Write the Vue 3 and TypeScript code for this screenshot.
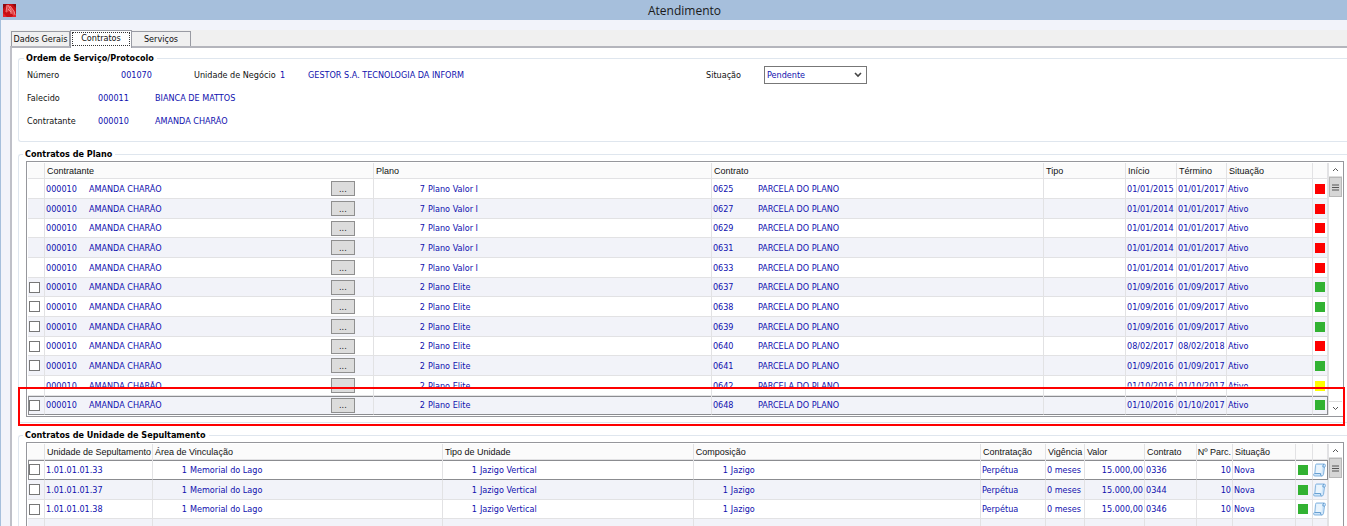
<script setup lang="ts">
import { ref } from 'vue'

type Color = 'red' | 'green' | 'yellow'

interface PlanRow {
  planNumber: number
  plan: string
  contract: string
  start: string
  end: string
  color: Color
  checkable: boolean
  covered?: boolean
  current?: boolean
}

interface UnitRow {
  unit: string
  contract: string
  current?: boolean
}

const tabs = ['Dados Gerais', 'Contratos', 'Serviços']
const activeTab = ref('Contratos')
const status = ref('Pendente')

const valor = (contract: string, start: string): PlanRow => ({
  planNumber: 7, plan: 'Plano Valor I', contract, start, end: '01/01/2017', color: 'red', checkable: false,
})
const elite = (contract: string, start: string, end: string, color: Color): PlanRow => ({
  planNumber: 2, plan: 'Plano Elite', contract, start, end, color, checkable: true,
})

const planRows: PlanRow[] = [
  valor('0625', '01/01/2015'),
  valor('0627', '01/01/2014'),
  valor('0629', '01/01/2014'),
  valor('0631', '01/01/2014'),
  valor('0633', '01/01/2014'),
  elite('0637', '01/09/2016', '01/09/2017', 'green'),
  elite('0638', '01/09/2016', '01/09/2017', 'green'),
  elite('0639', '01/09/2016', '01/09/2017', 'green'),
  elite('0640', '08/02/2017', '08/02/2018', 'red'),
  elite('0641', '01/09/2016', '01/09/2017', 'green'),
  { ...elite('0642', '01/10/2016', '01/10/2017', 'yellow'), checkable: false, covered: true },
  { ...elite('0648', '01/10/2016', '01/10/2017', 'green'), current: true },
]

const unitRows: UnitRow[] = [
  { unit: '1.01.01.01.33', contract: '0336', current: true },
  { unit: '1.01.01.01.37', contract: '0344' },
  { unit: '1.01.01.01.38', contract: '0346' },
]
</script>

<template>
  <div class="window">
    <header class="titlebar">
      <svg class="logo" width="13" height="13" viewBox="0 0 13 13" aria-hidden="true">
        <rect width="13" height="13" fill="#c90f14" />
        <path d="M0 0h4L0 5zM9 0h4v4z" fill="#8d0a10" />
        <path d="M0 9l4 4H0zM8 13l5-3v3z" fill="#e8222a" />
        <path d="M4 1l4 1 4 7-1 3-5-5-3 2z" fill="#e2474a" />
        <path d="M4 1L3 8M5 1l3 5v4M7 2l4 5 1 4M5 5l3 3" fill="none" stroke="#f59a9a" stroke-width="0.8" />
      </svg>
      <h1>Atendimento</h1>
    </header>

    <main class="client">
      <nav class="tabs" role="tablist">
        <button
          v-for="tab in tabs"
          :key="tab"
          type="button"
          role="tab"
          class="tab"
          :class="{ active: tab === activeTab }"
          :aria-selected="tab === activeTab"
          @click="activeTab = tab"
        ><span>{{ tab }}</span></button>
      </nav>

      <section class="panel">
        <fieldset class="group order">
          <legend>Ordem de Serviço/Protocolo</legend>
          <div class="line first">
            <label for="numero">Número</label>
            <output id="numero">001070</output>
            <label for="unidade">Unidade de Negócio</label>
            <output id="unidade">1</output>
            <output>GESTOR S.A. TECNOLOGIA DA INFORM</output>
            <label for="situacao">Situação</label>
            <div class="select">
              <select id="situacao" v-model="status">
                <option>Pendente</option>
                <option>Concluído</option>
              </select>
              <svg width="8" height="6" viewBox="0 0 8 6" aria-hidden="true">
                <path d="M1 1l3 3 3-3" fill="none" stroke="#444" stroke-width="1.6" />
              </svg>
            </div>
          </div>
          <div class="line">
            <label for="falecido">Falecido</label>
            <output id="falecido">000011</output>
            <output>BIANCA DE MATTOS</output>
          </div>
          <div class="line">
            <label for="contratante">Contratante</label>
            <output id="contratante">000010</output>
            <output>AMANDA CHARÃO</output>
          </div>
        </fieldset>

        <fieldset class="group plans">
          <legend>Contratos de Plano</legend>
          <div class="grid">
            <table>
              <colgroup>
                <col class="w-check"><col class="w-holder"><col class="w-plan"><col>
                <col class="w-kind"><col class="w-date"><col class="w-date-end"><col class="w-status"><col class="w-mark-last">
              </colgroup>
              <thead>
                <tr>
                  <th></th><th>Contratante</th><th>Plano</th><th>Contrato</th><th>Tipo</th>
                  <th>Início</th><th>Término</th><th>Situação</th><th></th>
                </tr>
              </thead>
              <tbody>
                <tr v-for="row in planRows" :key="row.contract" :class="{ covered: row.covered, current: row.current }">
                  <td class="check"><input v-if="row.checkable" type="checkbox" :aria-label="'Contrato ' + row.contract"></td>
                  <td>
                    <div class="cell">
                      <span class="code">000010</span><span class="name">AMANDA CHARÃO</span>
                      <button type="button" class="more"><span>...</span></button>
                    </div>
                  </td>
                  <td><div class="cell"><span class="plan-no">{{ row.planNumber }}</span><span>{{ row.plan }}</span></div></td>
                  <td><div class="cell"><span class="contract-no">{{ row.contract }}</span><span>PARCELA DO PLANO</span></div></td>
                  <td></td>
                  <td><span>{{ row.start }}</span></td>
                  <td><span>{{ row.end }}</span></td>
                  <td><span>Ativo</span></td>
                  <td class="mark"><i :class="row.color"></i></td>
                </tr>
              </tbody>
            </table>
            <div class="scrollbar">
              <button type="button" aria-label="Rolar para cima">
                <svg width="7" height="5" viewBox="0 0 7 5"><path d="M1 4l2.500-2.500L6 4" fill="none" stroke="#555" /></svg>
              </button>
              <div class="thumb"><svg width="7" height="7" viewBox="0 0 7 7"><path d="M0 1h7M0 3.500h7M0 6h7" stroke="#555" /></svg></div>
              <button type="button" class="down" aria-label="Rolar para baixo">
                <svg width="7" height="5" viewBox="0 0 7 5"><path d="M1 1l2.500 2.500L6 1" fill="none" stroke="#555" /></svg>
              </button>
            </div>
            <div class="highlight"></div>
          </div>
        </fieldset>

        <fieldset class="group units">
          <legend>Contratos de Unidade de Sepultamento</legend>
          <div class="grid">
            <table>
              <colgroup>
                <col class="w-check"><col class="w-unit"><col class="w-area"><col class="w-type"><col>
                <col class="w-hire"><col class="w-term"><col class="w-value"><col class="w-contract">
                <col class="w-parts"><col class="w-state"><col class="w-mark"><col class="w-mark-last">
              </colgroup>
              <thead>
                <tr>
                  <th></th><th>Unidade de Sepultamento</th><th>Área de Vinculação</th><th>Tipo de Unidade</th>
                  <th>Composição</th><th>Contratação</th><th>Vigência</th><th>Valor</th><th>Contrato</th>
                  <th class="num">Nº Parc.</th><th>Situação</th><th></th><th></th>
                </tr>
              </thead>
              <tbody>
                <tr v-for="row in unitRows" :key="row.unit" :class="{ current: row.current }">
                  <td class="check"><input type="checkbox" :aria-label="'Unidade ' + row.unit"></td>
                  <td>{{ row.unit }}</td>
                  <td><div class="cell"><span class="ref-no">1</span><span>Memorial do Lago</span></div></td>
                  <td><div class="cell"><span class="ref-no">1</span><span>Jazigo Vertical</span></div></td>
                  <td><div class="cell"><span class="ref-no">1</span><span>Jazigo</span></div></td>
                  <td>Perpétua</td>
                  <td>0 meses</td>
                  <td class="num">15.000,00</td>
                  <td>{{ row.contract }}</td>
                  <td class="num">10</td>
                  <td>Nova</td>
                  <td class="mark"><i class="green"></i></td>
                  <td class="mark doc">
                    <svg width="13" height="14" viewBox="0 0 13 14" aria-hidden="true">
                      <path d="M3.500 1H11q1.500 0 1.500 1.500T11.500 4L10.500 11.500Q10.200 13 8.700 13H2Q.5 13 .5 11.800T1.800 10.500L2.500 2.500Q2.600 1 3.500 1z" fill="#cfe6fa" stroke="#79addb" stroke-width="0.900" />
                      <path d="M3.500 2h6l-1 8H2.700z" fill="#e9f4fd" />
                      <path d="M1.800 10.500H7.500Q7 12.600 8.700 13M11 1Q9.700 1.500 9.900 4h1.600" fill="none" stroke="#5f98cd" stroke-width="0.900" />
                    </svg>
                  </td>
                </tr>
                <tr><td v-for="n in 13" :key="n"></td></tr>
              </tbody>
            </table>
            <div class="scrollbar">
              <button type="button" aria-label="Rolar para cima">
                <svg width="7" height="5" viewBox="0 0 7 5"><path d="M1 4l2.500-2.500L6 4" fill="none" stroke="#555" /></svg>
              </button>
              <div class="thumb"><svg width="7" height="7" viewBox="0 0 7 7"><path d="M0 1h7M0 3.500h7M0 6h7" stroke="#555" /></svg></div>
            </div>
          </div>
        </fieldset>
      </section>
    </main>
  </div>
</template>

<style>
body {
  margin: 0;
}
</style>

<style scoped>
* {
  box-sizing: border-box;
}
.window {
  height: 100vh;
  overflow: hidden;
  display: flex;
  flex-direction: column;
  background: #f2f3fa;
  color: #111;
  font: 9px/12px "DejaVu Sans Condensed", "DejaVu Sans", sans-serif;
}
button,
select {
  font: inherit;
  color: inherit;
  padding: 0;
  margin: 0;
  border-radius: 0;
}
.titlebar {
  flex: none;
  height: 20px;
  display: grid;
  grid-template-columns: 19px 1fr;
  align-items: center;
  padding-left: 3px;
  background: #a6bfdc;
}
.titlebar h1 {
  margin: 0;
  padding-top: 2px;
  font: 12px/16px "Open Sans", sans-serif;
  text-align: center;
  color: #1a1a1a;
}
.client {
  flex: 1;
  min-height: 0;
  display: flex;
  flex-direction: column;
  border-left: 1px solid #a6bfdc;
  padding: 10px 0 0 9px;
}
.tabs {
  flex: none;
  height: 16px;
  display: flex;
  align-items: flex-end;
  padding-left: 1px;
  background: #f0f0f0;
}
.tab {
  width: 59px;
  height: 15px;
  border: 1px solid #999ba3;
  border-bottom: 0;
  background: #f0f0f0;
  white-space: nowrap;
}
.tab + .tab {
  border-left: 0;
}
.tab.active {
  width: 62px;
  height: 18px;
  margin-bottom: -2px;
  padding: 1px;
  border-left: 1px solid #999ba3;
  background: #fff;
  z-index: 1;
}
.tab.active span {
  display: block;
  height: 14px;
  margin-bottom: 1px;
  border: 1px dotted #333;
  line-height: 11px;
}
.panel {
  flex: 1;
  min-height: 0;
  padding: 3px 0 0 6px;
  border-top: 2px solid #b4b5bc;
  border-left: 2px solid #bfc0c8;
  background: #fff;
}
.group {
  min-width: 0;
  margin: 0 0 5px;
  padding: 0 3px 5px 7px;
  border: 1px solid #dfe6ee;
  border-right: 0;
  border-radius: 3px 0 0 3px;
}
.group legend {
  margin-left: -3px;
  padding: 0 3px 0 2px;
  font-weight: bold;
  line-height: 14px;
  color: #000;
}
.order {
  padding: 0 3px 9px 8px;
}
.line {
  height: 23px;
  display: grid;
  grid-template-columns: 71px 57px 1fr;
  align-items: center;
}
.line.first {
  height: 22px;
  margin-top: -1px;
  grid-template-columns: 94px 73px 86px 28px 398px 58px 103px;
}
.line output,
.line select,
td {
  color: #1010ae;
}
.select {
  display: grid;
  grid-template-columns: 1fr 13px;
  align-items: center;
}
.select select {
  grid-area: 1 / 1 / 2 / 3;
  width: 100%;
  height: 18px;
  padding-left: 2px;
  border: 1px solid #777;
  background: #fff;
  appearance: none;
}
.select svg {
  grid-area: 1 / 2;
  pointer-events: none;
}
.grid {
  position: relative;
  display: flex;
  border: 1px solid #96979c;
  padding: 1px;
}
table {
  flex: 1;
  width: 100%;
  table-layout: fixed;
  border-collapse: separate;
  border-spacing: 0;
}
th,
td {
  padding: 0 0 0 2px;
  border-right: 1px solid #e2e2e4;
  border-bottom: 1px solid #e2e2e4;
  text-align: left;
  white-space: nowrap;
  overflow: hidden;
}
th {
  height: 16px;
  background: #fbfbfb;
  color: #111;
  font: 9px/14px "Liberation Sans", Arial, sans-serif;
}
td {
  height: 20px;
  padding-left: 1px;
}
tbody tr:nth-child(3n) td {
  height: 19px;
}
tbody tr:nth-child(even) td {
  background: #f2f3f9;
}
.current td {
  border-bottom-color: #8b8c90;
  box-shadow: inset 0 1px #8b8c90;
}
.current td:first-child {
  border-left: 1px solid #8b8c90;
  padding-left: 0;
}
.current td:last-child {
  border-right-color: #8b8c90;
}
.cell {
  display: flex;
  align-items: center;
}
.code {
  width: 43px;
}
.name {
  flex: 1;
}
.more {
  width: 24px;
  height: 15px;
  margin-right: 18px;
  border: 1px solid #8f8f8f;
  background: #dcdcdc;
  color: #222;
  line-height: 12px;
}
.covered span {
  clip-path: inset(0 0 4px 0);
}
.covered .more span {
  visibility: hidden;
}
.plan-no {
  width: 50px;
  margin-right: 3px;
  text-align: right;
}
.ref-no {
  width: 33px;
  margin-right: 3px;
  text-align: right;
}
.contract-no {
  width: 45px;
}
td.num,
th.num {
  padding: 0 1px 0 0;
  text-align: right;
}
.check input {
  display: block;
  width: 11px;
  height: 11px;
  margin: 0;
  border: 1px solid #777;
  background: #fff;
  appearance: none;
}
.check input:checked {
  background: #1010ae;
}
td.mark {
  padding-left: 2px;
}
.mark i {
  display: block;
  width: 10px;
  height: 10px;
}
td.doc {
  padding-left: 0;
}
.doc svg {
  display: block;
}
.red {
  background: #fe0000;
}
.green {
  background: #32b232;
}
.yellow {
  background: #ffff00;
}
.scrollbar {
  flex: none;
  width: 14px;
  display: flex;
  flex-direction: column;
  border-left: 1px solid #e2e2e4;
  background: #fff;
}
.scrollbar button,
.thumb {
  display: grid;
  place-items: center;
  height: 14px;
  border: 0;
  border-bottom: 1px solid #ddd;
  background: #fff;
}
.scrollbar .thumb {
  height: 20px;
  border: 1px solid #b8b8b8;
  background: #d6d6d6;
}
.scrollbar .down {
  margin-top: auto;
  border: 0;
  border-top: 1px solid #ddd;
}
.highlight {
  position: absolute;
  inset: auto -2px -10px -9px;
  height: 39px;
  border: 2px solid #fe0000;
  pointer-events: none;
}
.w-check { width: 17px; }
.w-holder { width: 25.300%; }
.w-plan { width: 26%; }
.w-kind { width: 82px; }
.w-date { width: 51px; }
.w-date-end { width: 50px; }
.w-status { width: 86px; }
.w-mark { width: 17px; }
.w-mark-last { width: 15px; }
.w-unit { width: 108px; }
.w-area { width: 22.300%; }
.w-type { width: 19.300%; }
.w-hire { width: 65px; }
.w-term { width: 39px; }
.w-value { width: 60px; }
.w-contract { width: 52px; }
.w-parts { width: 36px; }
.w-state { width: 63px; }
</style>
